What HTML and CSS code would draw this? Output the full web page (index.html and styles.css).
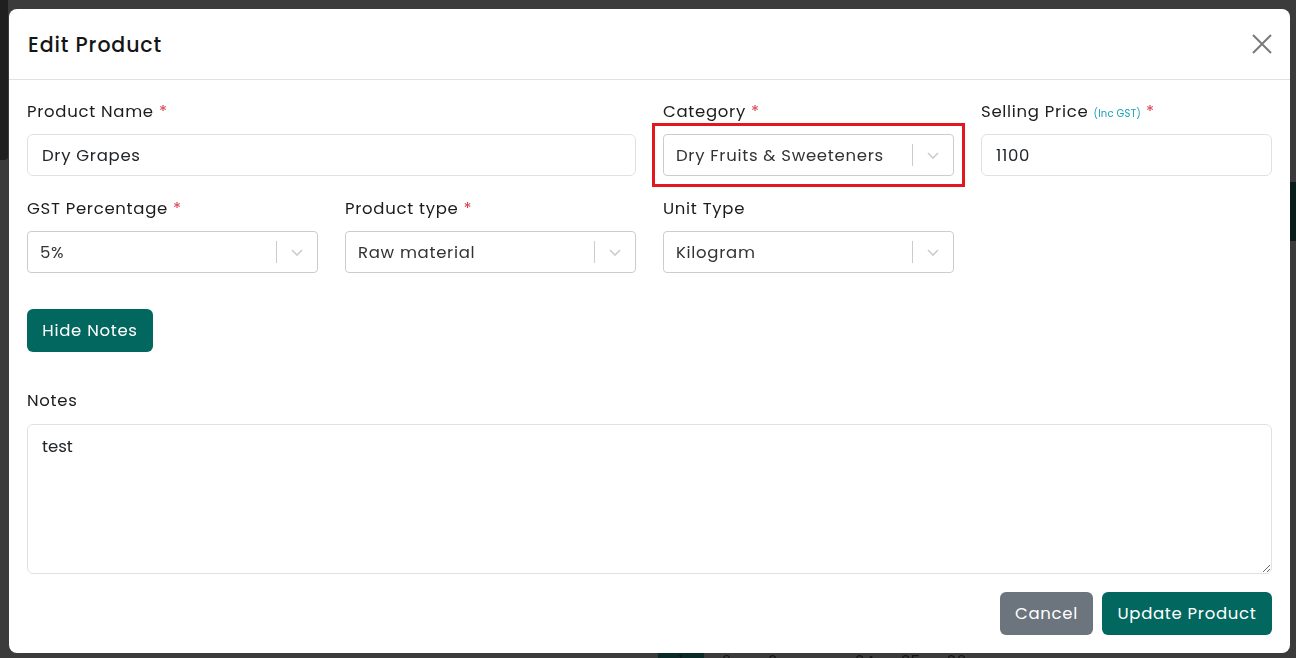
FILE: index.html
```html
<!DOCTYPE html>
<html lang="en">
<head>
<meta charset="utf-8">
<title>Edit Product</title>
<link rel="stylesheet" href="styles.css">
</head>
<body>
<div class="page">
  <div class="page-sidebar"></div>
  <div class="page-bar"></div>
  <nav class="page-pager">
    <span>«</span><span class="on">1</span><span>2</span><span>3</span><span>…</span><span>34</span><span>35</span><span>36</span><span>»</span>
  </nav>
</div>

<div class="backdrop">
  <div class="modal">
    <header class="modal-header">
      <h2 class="modal-title">Edit Product</h2>
      <button class="close" type="button" aria-label="Close">
        <svg width="20" height="20" viewBox="0 0 20 20"><path d="M1 1L19 19M19 1L1 19" stroke="#7a7a7a" stroke-width="2" fill="none"/></svg>
      </button>
    </header>

    <div class="modal-body">
      <div class="grid">
        <div class="field span-2">
          <label class="label">Product Name <span class="req">*</span></label>
          <input class="input" type="text" value="Dry Grapes">
        </div>
        <div class="field">
          <label class="label">Category <span class="req">*</span></label>
          <div class="select highlighted">
            <span class="select-value">Dry Fruits &amp; Sweeteners</span>
            <span class="select-sep"></span>
            <span class="select-arrow"><svg width="20" height="20" viewBox="0 0 20 20"><path d="M5 8l5 5 5-5" stroke="#cccccc" stroke-width="1.6" fill="none"/></svg></span>
          </div>
        </div>
        <div class="field">
          <label class="label">Selling Price <span class="hint">(Inc GST)</span> <span class="req">*</span></label>
          <input class="input" type="text" value="1100">
        </div>

        <div class="field">
          <label class="label">GST Percentage <span class="req">*</span></label>
          <div class="select">
            <span class="select-value">5%</span>
            <span class="select-sep"></span>
            <span class="select-arrow"><svg width="20" height="20" viewBox="0 0 20 20"><path d="M5 8l5 5 5-5" stroke="#cccccc" stroke-width="1.6" fill="none"/></svg></span>
          </div>
        </div>
        <div class="field">
          <label class="label">Product type <span class="req">*</span></label>
          <div class="select">
            <span class="select-value">Raw material</span>
            <span class="select-sep"></span>
            <span class="select-arrow"><svg width="20" height="20" viewBox="0 0 20 20"><path d="M5 8l5 5 5-5" stroke="#cccccc" stroke-width="1.6" fill="none"/></svg></span>
          </div>
        </div>
        <div class="field">
          <label class="label">Unit Type</label>
          <div class="select">
            <span class="select-value">Kilogram</span>
            <span class="select-sep"></span>
            <span class="select-arrow"><svg width="20" height="20" viewBox="0 0 20 20"><path d="M5 8l5 5 5-5" stroke="#cccccc" stroke-width="1.6" fill="none"/></svg></span>
          </div>
        </div>
      </div>

      <button class="btn btn-primary toggle" type="button">Hide Notes</button>

      <div class="notes">
        <label class="label">Notes</label>
        <textarea class="textarea">test</textarea>
      </div>

      <div class="actions">
        <button class="btn btn-secondary" type="button">Cancel</button>
        <button class="btn btn-primary" type="button">Update Product</button>
      </div>
    </div>
  </div>
</div>
</body>
</html>
```

FILE: styles.css
```css
* { box-sizing: border-box; }

html, body {
  margin: 0;
  height: 100%;
  overflow: hidden;
}

body {
  background: #3b3b3b;
  font-family: "Poppins", "Inter", "Noto Sans", sans-serif;
  color: #212529;
  letter-spacing: 0.7px;
}

/* dimmed page behind the dialog */
.page {
  position: fixed;
  inset: 0;
}

.page-sidebar {
  position: absolute;
  left: 0;
  top: 0;
  width: 8px;
  height: 160px;
  background: #1f1f1f;
  border-radius: 0 0 4px 0;
}

.page-bar {
  position: absolute;
  right: 0;
  top: 182px;
  width: 10px;
  height: 59px;
  background: #0b1d1a;
}

.page-pager {
  position: absolute;
  left: 612px;
  top: 640px;
  display: flex;
  font-size: 15px;
  line-height: 18px;
  color: #141414;
}

.page-pager span {
  width: 46px;
  height: 30px;
  padding-top: 12px;
  text-align: center;
}

.page-pager .on {
  background: #0a2a27;
}

.backdrop {
  position: fixed;
  inset: 0;
  padding: 9px 6px 5px 9px;
}

.modal {
  background: #fff;
  border-radius: 8px;
  width: 1281px;
  height: 644px;
  display: flex;
  flex-direction: column;
}

.modal-header {
  height: 71px;
  display: flex;
  align-items: center;
  justify-content: space-between;
  padding: 0 18px 0 19px;
  border-bottom: 1px solid #dee2e6;
}

.modal-title {
  margin: 0;
  font-size: 20.5px;
  font-weight: 500;
  color: #151515;
  letter-spacing: 0.9px;
}

.close {
  border: 0;
  background: none;
  padding: 0;
  width: 20px;
  height: 20px;
  margin-top: -1px;
  cursor: pointer;
}

.close svg { display: block; }

.modal-body {
  flex: 1;
  padding: 20px 18px 18px 18px;
  display: flex;
  flex-direction: column;
}

.grid {
  display: grid;
  grid-template-columns: repeat(4, 291px);
  column-gap: 27px;
  row-gap: 21px;
}

.span-2 { grid-column: span 2; }

.field {
  display: flex;
  flex-direction: column;
}

.label {
  font-size: 16.5px;
  line-height: 24px;
  height: 24px;
  margin-bottom: 10px;
  color: #1c1c1c;
  white-space: nowrap;
}

.req { color: #dc3545; }

.hint {
  font-size: 10px;
  letter-spacing: 0.2px;
  color: #17a2b8;
}

.input {
  height: 42px;
  border: 1px solid #dee2e6;
  border-radius: 6px;
  padding: 0 14px;
  font: inherit;
  font-size: 16.5px;
  letter-spacing: 0.7px;
  color: #212529;
  outline: none;
}

.select {
  position: relative;
  height: 42px;
  border: 1px solid #cccccc;
  border-radius: 4px;
  display: flex;
  align-items: center;
  padding-left: 12px;
  font-size: 16.5px;
  color: #333333;
}

.select-value { flex: 1; }

.select-sep {
  width: 1px;
  height: 22px;
  background: #cccccc;
}

.select-arrow {
  width: 40px;
  display: flex;
  justify-content: center;
}

.select-arrow svg { display: block; }

/* red review marker around the category field */
.highlighted::after {
  content: "";
  position: absolute;
  left: -12px;
  top: -12px;
  right: -12px;
  bottom: -12px;
  border: 3px solid #e3171e;
}

.btn {
  border: 0;
  border-radius: 6px;
  height: 43px;
  padding: 0 12px;
  font: inherit;
  font-size: 16.5px;
  font-weight: 400;
  letter-spacing: 0.7px;
  color: #fff;
  cursor: pointer;
}

.btn-primary { background: #02675f; }
.btn-secondary { background: #6c757d; }

.toggle {
  align-self: flex-start;
  margin-top: 36px;
  width: 126px;
}

.notes {
  display: flex;
  flex-direction: column;
  margin-top: 37px;
}

.notes .label { margin-bottom: 11px; }

.textarea {
  height: 150px;
  border: 1px solid #dee2e6;
  border-radius: 6px;
  padding: 9px 14px;
  font: inherit;
  font-size: 16.5px;
  color: #212529;
  resize: vertical;
  outline: none;
}

.actions {
  margin-top: 18px;
  display: flex;
  justify-content: flex-end;
  gap: 9px;
}

.actions .btn-secondary { width: 93px; }
.actions .btn-primary { width: 170px; }
```
